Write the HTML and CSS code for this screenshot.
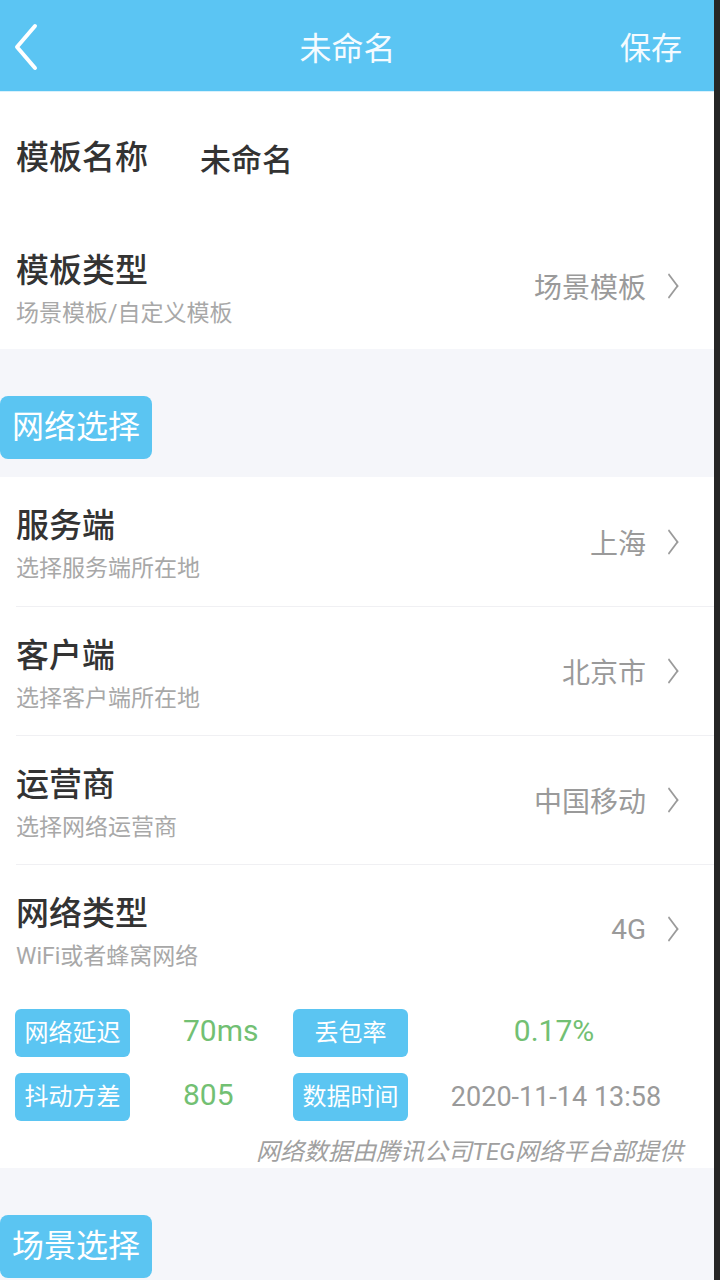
FILE: index.html
```html
<!DOCTYPE html>
<html>

<head>
    <meta charset="UTF-8">
    <meta name="viewport" content="width=device-width, initial-scale=1.0">
    <title>未命名</title>
    <link rel="stylesheet" href="styles.css">
</head>

<body>
    <div class="screen">
        <!-- 顶部导航 -->
        <div class="header">
            <a href="javascript:;" class="back">
                <svg width="26" height="48" viewBox="0 0 26 48">
                    <polyline points="22,3 4,24 22,45" fill="none" stroke="#fff" stroke-width="4" stroke-linecap="round" stroke-linejoin="round" />
                </svg>
            </a>
            <h1 class="title">未命名</h1>
            <a href="javascript:;" class="save">保存</a>
        </div>

        <!-- 模板 -->
        <div class="group">
            <div class="row row-name">
                <span class="label">模板名称</span>
                <span class="name">未命名</span>
            </div>
            <div class="row row-type">
                <div class="info">
                    <p class="label">模板类型</p>
                    <p class="desc">场景模板/自定义模板</p>
                </div>
                <div class="value">场景模板<i class="arrow"></i></div>
            </div>
        </div>

        <div class="section">
            <span class="tag">网络选择</span>
        </div>

        <!-- 网络选择 -->
        <div class="group">
            <div class="row line">
                <div class="info">
                    <p class="label">服务端</p>
                    <p class="desc">选择服务端所在地</p>
                </div>
                <div class="value">上海<i class="arrow"></i></div>
            </div>
            <div class="row line">
                <div class="info">
                    <p class="label">客户端</p>
                    <p class="desc">选择客户端所在地</p>
                </div>
                <div class="value">北京市<i class="arrow"></i></div>
            </div>
            <div class="row line">
                <div class="info">
                    <p class="label">运营商</p>
                    <p class="desc">选择网络运营商</p>
                </div>
                <div class="value">中国移动<i class="arrow"></i></div>
            </div>
            <div class="row line">
                <div class="info">
                    <p class="label">网络类型</p>
                    <p class="desc">WiFi或者蜂窝网络</p>
                </div>
                <div class="value">4G<i class="arrow"></i></div>
            </div>
            <div class="stats">
                <span class="chip">网络延迟</span>
                <span class="num">70ms</span>
                <span class="chip">丢包率</span>
                <span class="num center">0.17%</span>
                <span class="chip">抖动方差</span>
                <span class="num">805</span>
                <span class="chip">数据时间</span>
                <span class="time">2020-11-14 13:58</span>
            </div>
            <p class="credit">网络数据由腾讯公司TEG网络平台部提供</p>
        </div>

        <div class="section">
            <span class="tag">场景选择</span>
        </div>
    </div>
</body>

</html>
```

FILE: styles.css
```css
@charset "UTF-8";
/*初始化 reset*/

body,
h1,
p {
    margin: 0;
    padding: 0;
}

body {
    font-family: Roboto, "Noto Sans CJK SC", sans-serif;
    color: #333;
    background: #262626;
}

a {
    text-decoration: none;
}

.screen {
    width: 714px;
    height: 1280px;
    overflow: hidden;
    background: #f5f6fa;
    border-right: 6px solid #262626;
}

/* 顶部导航 */
.header {
    height: 92px;
    display: flex;
    align-items: center;
    padding: 0 32px 0 13px;
    background: #5bc5f3;
    border-bottom: 1px solid #d9f1fc;
    box-sizing: border-box;
}

.back {
    width: 80px;
    display: flex;
    padding-top: 2px;
}

.title {
    flex: 1;
    text-align: center;
    font-size: 32px;
    font-weight: normal;
    color: #f4fbff;
}

.save {
    width: 80px;
    text-align: right;
    font-size: 31px;
    color: #f4fbff;
}

/* 列表 */
.group {
    background: #fff;
}

.row {
    display: flex;
    align-items: center;
    justify-content: space-between;
    height: 129px;
    padding: 5px 36px 0 16px;
    box-sizing: border-box;
}

.row-name {
    height: 131px;
    justify-content: flex-start;
    padding-top: 0;
}

.row-type {
    height: 126px;
}

.line + .line {
    border-top: 1px solid #f0f0f3;
    margin-left: 16px;
    padding-left: 0;
}

.label {
    font-size: 33px;
    line-height: 44px;
    font-weight: 500;
    color: #333;
}

.name {
    margin-left: 52px;
    font-size: 31px;
    font-weight: 500;
    color: #333;
}

.desc {
    margin-top: 6px;
    font-size: 23px;
    line-height: 30px;
    color: #a8a8a8;
}

.value {
    display: flex;
    align-items: center;
    font-size: 28px;
    color: #9a9a9a;
    margin-top: -5px;
}

.arrow {
    width: 16px;
    height: 16px;
    margin-left: 14px;
    border-top: 2px solid #9a9a9a;
    border-right: 2px solid #9a9a9a;
    transform: scaleX(0.75) rotate(45deg);
}

/* 分组标题 */
.section {
    padding: 47px 0 18px;
}

.tag {
    display: inline-block;
    height: 63px;
    line-height: 63px;
    padding: 0 12px;
    font-size: 32px;
    color: #fff;
    background: #5bc5f2;
    border-radius: 8px;
}

/* 网络数据 */
.stats {
    display: grid;
    grid-template-columns: 115px 163px 115px 1fr;
    grid-auto-rows: 48px;
    row-gap: 16px;
    align-items: center;
    padding: 16px 0 0 15px;
}

.chip {
    height: 48px;
    line-height: 48px;
    text-align: center;
    font-size: 24px;
    color: #fff;
    background: #5bc5f2;
    border-radius: 6px;
}

.num {
    padding-left: 53px;
    font-size: 30px;
    color: #72c073;
    margin-top: -6px;
}

.num.center {
    padding: 0 14px 0 0;
    text-align: center;
}

.time {
    padding-right: 10px;
    text-align: center;
    font-size: 27px;
    color: #9a9a9a;
}

.credit {
    padding: 16px 31px 1px 0;
    text-align: right;
    font-size: 24px;
    line-height: 30px;
    font-style: italic;
    color: #a0a0a0;
}
```
